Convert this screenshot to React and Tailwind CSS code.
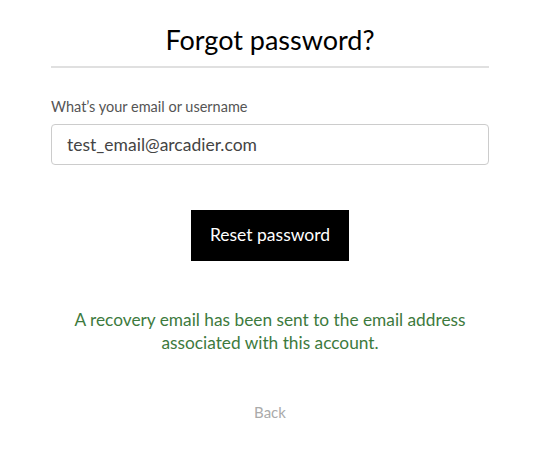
export default function App() {
  return (
    <main className="min-h-screen bg-white font-['Lato','Noto_Sans',sans-serif]">
      <div className="ml-[51px] w-[438px] pt-[23px]">
        <h1 className="text-center text-[27px] leading-[33px] text-black">
          Forgot password?
        </h1>
        <hr className="mt-[10px] border-0 h-[2px] bg-[#e0e0e0]" />

        <label className="block mt-[30px] text-[14.5px] leading-[18px] text-[#555]">
          What’s your email or username
        </label>
        <input
          type="text"
          defaultValue="test_email@arcadier.com"
          className="mt-[8px] block w-full h-[41px] rounded-[4px] border border-[#ccc] px-[15px] text-[17.5px] text-[#444] outline-none font-['Lato',sans-serif]"
        />

        <div className="flex justify-center mt-[45px]">
          <button className="w-[158px] h-[51px] bg-black text-white text-[17.5px] font-['Lato',sans-serif]">
            Reset password
          </button>
        </div>

        <p className="mt-[47px] text-center text-[17.3px] leading-[23px] text-[#3d7a3d]">
          A recovery email has been sent to the email address
          <br />
          associated with this account.
        </p>

        <div className="mt-[46px] text-center">
          <a href="#" className="text-[15px] text-[#aaa]">
            Back
          </a>
        </div>
      </div>
    </main>
  );
}
